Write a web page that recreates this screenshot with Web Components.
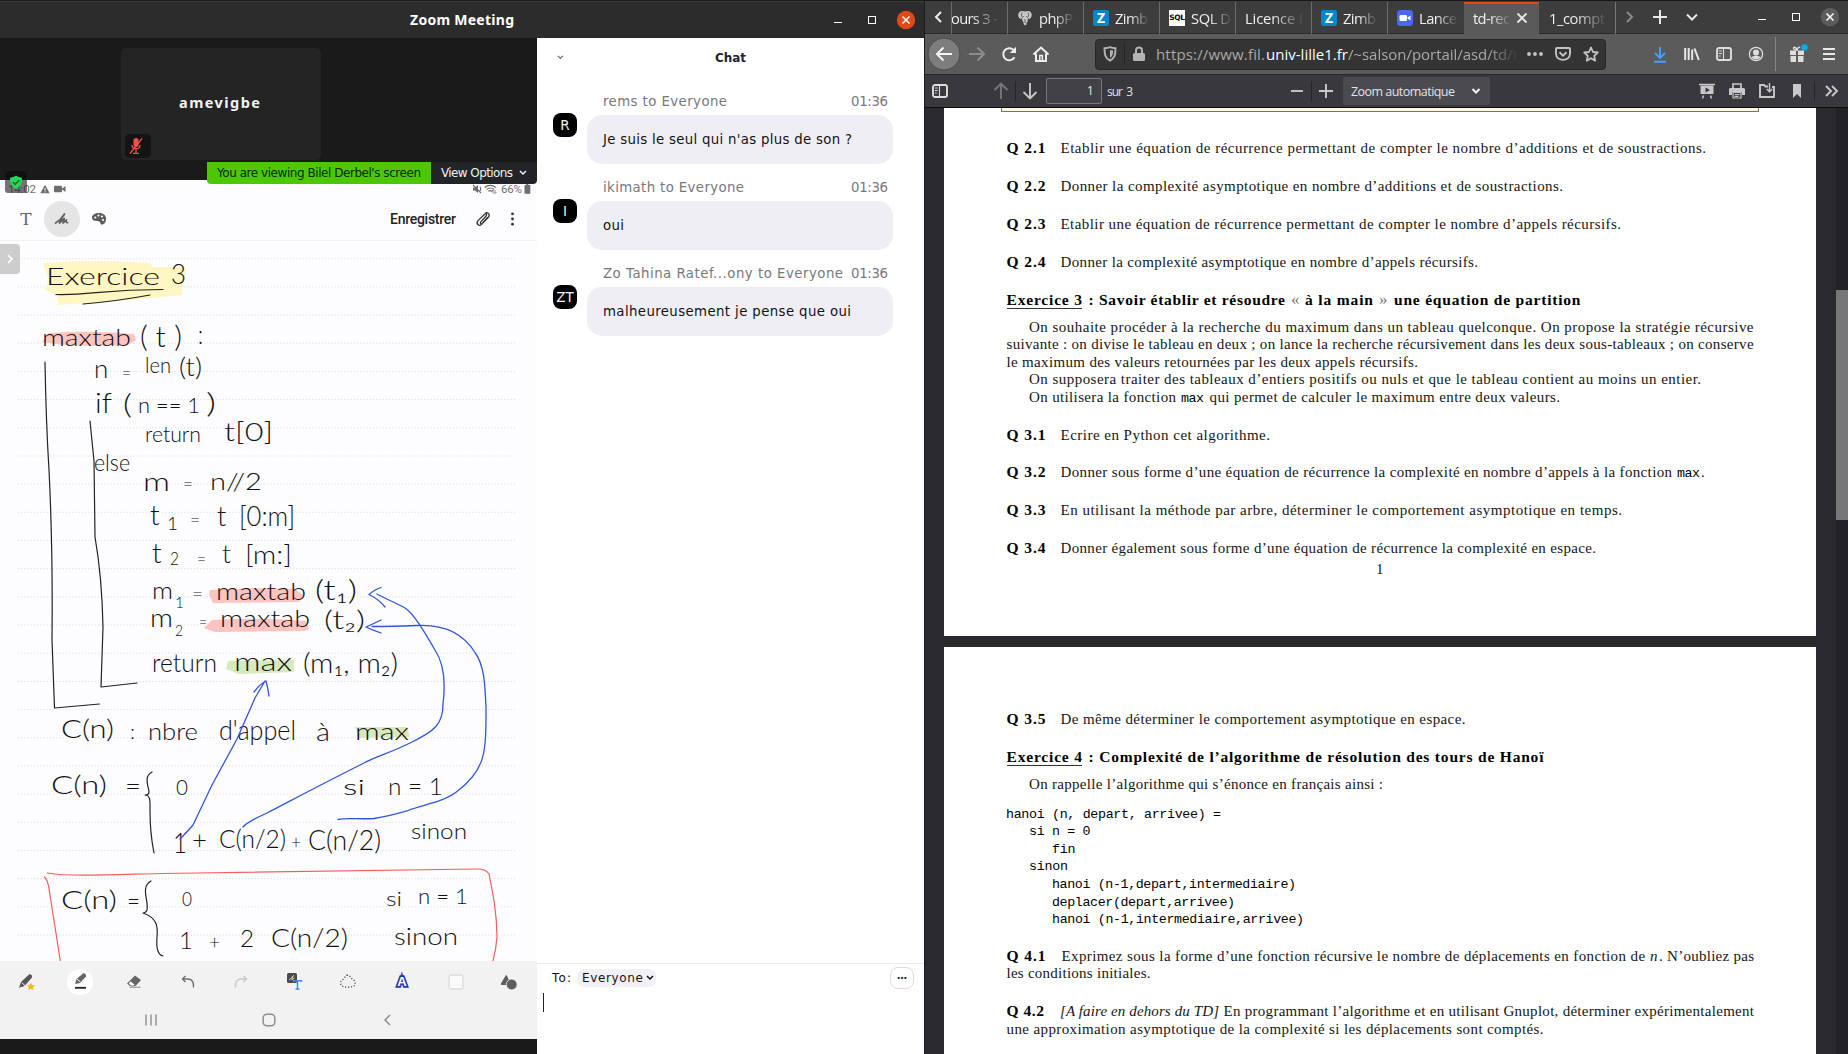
<!DOCTYPE html>
<html lang="fr">
<head>
<meta charset="utf-8">
<title>Zoom Meeting</title>
<style>
html,body{margin:0;height:100%;background:#1b1b1b;overflow:hidden}
body{display:flex;width:1848px;height:1054px}
</style>
</head>
<body>
<zoom-window></zoom-window>
<browser-window></browser-window>
<script>
const define = (name, css, html) => customElements.define(name, class extends HTMLElement {
  connectedCallback() {
    if (this.shadowRoot) return;
    this.attachShadow({ mode: 'open' }).innerHTML =
      `<style>*{box-sizing:border-box}:host{display:block;box-sizing:border-box}${css}</style>` + html(this);
  }
});

/* A flex row: every item is [left, width, markup, class]; gaps between items become margins. */
const row = (start, items) => {
  let at = start;
  return items.map(([x, w, html, cls = '']) => {
    const m = x - at; at = x + w;
    return `<div class="it ${cls}" style="flex:none;width:${w}px;margin-left:${m}px">${html}</div>`;
  }).join('');
};
const fit = (text, w, extra = '') => `<fit-text w="${w}" ${extra}>${text}</fit-text>`;
const tx = (x, x2, text, cls) => [x, x2 - x, fit(text, x2 - x), cls];
const ic = (cx, w, name) => [cx - w / 2, w, `<ui-icon name="${name}"></ui-icon>`];
const sep = (x, cls = 'sep') => [x, 1, '', cls];

/* name: [width, height, markup] */
const ICONS = {
  mic: [14, 18, '<rect x="4.5" y="1" width="5" height="9" rx="2.5" fill="#f0514f"/><path d="M3 8c0 5 8 5 8 0M7 12v4M4 16.3h6M13 1.500L1 16.500" stroke="#f0514f" fill="none" stroke-width="1.3"/>'],
  shield: [22, 22, '<rect width="22" height="22" rx="3" fill="#2d2d2d" opacity=".66"/><rect width="22" height="9" rx="3" fill="#111"/><path d="M11 4.500c2 1.600 4 2 6 2.200 0 5-1 8.600-6 11.300-5-2.700-6-6.300-6-11.300 2-.2 4-.6 6-2.200z" fill="#23d959"/><path d="M8 11l2.200 2.300L14.300 9" stroke="#1f6b40" stroke-width="1.500" fill="none"/>'],
  warn: [10, 10, '<path d="M5 .8L9.700 9.300H.3z" fill="#6d6d6d"/><path d="M5 4v2.500M5 7.300v1" stroke="#fff" stroke-width="1"/>'],
  cam: [12, 8, '<rect y=".8" width="8" height="6.500" rx="1" fill="#6d6d6d"/><path d="M7.500 4L11.500 1v6z" fill="#6d6d6d"/>'],
  mute: [10, 10, '<path d="M1 3.500h2L6 1v8L3 6.500H1z" fill="#6d6d6d"/><path d="M1 1l8 8M8 2.500c1 1.500 1 3 0 4.500" stroke="#6d6d6d" stroke-width="1.100" fill="none"/>'],
  wifi: [13, 10, '<path d="M.8 3.500c3-2.800 8-2.800 11 0M2.600 5.500c2-2 5.500-2 7.500 0M4.400 7.300c1-1 3-1 4 0" stroke="#6d6d6d" stroke-width="1.200" fill="none"/><path d="M9 9.500V6l-1.500 1.500M11 6v3.500L12.500 8" stroke="#6d6d6d" fill="none" stroke-width=".8"/>'],
  batt: [7, 10, '<path d="M2.300 0h2v1h2v8.800H.5V1h1.800z" fill="#6d6d6d"/>'],
  pen: [16, 14, '<path d="M1 11.500C5 9 9 4.500 10.500 2 8.500 5 6 8.500 5.500 11.200 7.500 9.500 9 7.500 10.300 6.500 10 8 9 9.500 9 11c1.500-1 2.500-2.500 3.500-3-.8 1.700-.3 3 1.800 2.700" fill="none" stroke="#626262" stroke-width="1.700" stroke-linejoin="round"/>'],
  palette: [16, 14, '<path d="M8 1c4 0 7 2.200 7 5.500 0 3.500-1.500 6-4 6-2.300 0-1-3-3.500-3.300C4 9 1 8.500 1 5.500 1 2.800 4 1 8 1z" fill="#5c5c5c"/><g fill="#fdfdff"><circle cx="4.300" cy="5.500" r="1.100"/><circle cx="7.500" cy="3.500" r="1.100"/><circle cx="11" cy="4.500" r="1.100"/><circle cx="12" cy="8" r="1.100"/></g>'],
  clip: [16, 16, '<path d="M12.800 6.300L7.200 12.500c-1 1-2.500-.3-1.600-1.400L11 5.200c1.500-1.700 0-3-1.400-2L3 9.600c-2.500 3 1 6.300 3.600 3.800l7-7.400C15.500 3 12.500.5 10 2.500" fill="none" stroke="#333" stroke-width="1.300"/>'],
  dots: [5, 16, '<g fill="#333"><circle cx="2.500" cy="2.800" r="1.400"/><circle cx="2.500" cy="8" r="1.400"/><circle cx="2.500" cy="13.200" r="1.400"/></g>'],
  gt: [8, 10, '<path d="M2 1l4 4-4 4" fill="none" stroke="#fff" stroke-width="1.700"/>'],
  down: [8, 6, '<path d="M1 1l3 3 3-3" fill="none" stroke="currentColor" stroke-width="1.500"/>'],
  hpen: [18, 18, '<path d="M1 15l2-6 2 4zM3.500 8.500L11 1.500c1.500-1 3.800 1 3 3L7.500 12l-3 2-2-2z" fill="#555"/><path d="M4 10l3 2.500" stroke="#eee"/><path d="M13 9.500l1.300 2.400 2.700.4-2 2 .5 2.700-2.500-1.300L10.500 17l.5-2.700-2-2 2.700-.4z" fill="#f8b916"/>'],
  hpen2: [26, 26, '<circle cx="13" cy="13" r="13" fill="#fff"/><path d="M8 15l1.500-5L16 4.500c1.500-.8 3.500 1 3 3L13 14z" fill="#666"/><path d="M10 10l3.500 3" stroke="#fff"/><path d="M8 18.800h11" stroke="#222" stroke-width="1.800"/>'],
  eraser: [20, 16, '<path d="M11 1.500L17 6l-5.500 6H6L3 9.500z" fill="#666"/><path d="M4.500 9.200l2-2.200 4.500 3.500-1.500 1.500H7z" fill="#fff" stroke="#666" stroke-width=".8"/><path d="M5.500 13.200h11" stroke="#888"/>'],
  undo: [16, 14, '<path d="M5.500 1L2.500 4l3 3M3 4h5c4.500 0 6 4 5.500 8.500" fill="none" stroke="#707070" stroke-width="1.400"/>'],
  redo: [16, 14, '<path d="M10.500 1l3 3-3 3M13 4H8C3.500 4 2 8 2.500 12.500" fill="none" stroke="#c7c7c7" stroke-width="1.400"/>'],
  ocr: [17, 17, '<rect x="1" y="0" width="10" height="10" rx="1.500" fill="#4a4a4a"/><path d="M3 7c2-1 3-3 4.500-4.500C6 5 6 6 6 7c1-1 2-2 2.500-2" stroke="#ddd" fill="none"/><path d="M7.500 9V7.800h8V9M11.500 8v8M9.500 16h4" stroke="#3a8ee6" stroke-width="1.400" fill="none"/>'],
  lasso: [18, 15, '<path d="M8.500 1.200C6.500 1 6 3.500 4.500 5 2 6.500.5 9 2.500 11.500c2.500 2.500 11 2 13 0 1.500-2.500 0-5.500-2-6.500-2-1-2.500-3.800-5-3.800z" fill="none" stroke="#555" stroke-width="1.400" stroke-dasharray="1.200 1.700"/>'],
  square: [16, 16, '<rect x="1" y="1" width="14" height="14" rx="2.500" fill="#fafafa" stroke="#dcdcdc" stroke-width="1.300"/>'],
  shapes: [18, 16, '<path d="M6 1c1 0 3 5 3.500 7.500-1 .8-2 1.500-2.500 2.500H1.500c-1 0-.9-.8 0-2.500z" fill="#5e5e5e"/><circle cx="11.700" cy="10.500" r="5.400" fill="#5e5e5e" stroke="#f2f2f3" stroke-width=".8"/>'],
  recent: [14, 14, '<path d="M2 1.500v11M7 1.500v11M12 1.500v11" stroke="#8e8e8e" stroke-width="1.400"/>'],
  home0: [14, 14, '<rect x="1.200" y="1.200" width="11.600" height="11.600" rx="3.500" fill="none" stroke="#8e8e8e" stroke-width="1.500"/>'],
  back0: [10, 14, '<path d="M8 2L3 7l5 5" stroke="#8e8e8e" stroke-width="1.500" fill="none"/>'],
  wmin: [10, 10, '<path d="M1 7.500h8" stroke="#fff" stroke-width="1"/>'],
  wmax: [10, 10, '<rect x="1.500" y="1.500" width="7" height="7" fill="none" stroke="#fff"/>'],
  wclose: [20, 20, '<circle cx="10" cy="10" r="9.200" fill="var(--close,#e2491a)"/><path d="M6.500 6.500l7 7M13.500 6.500l-7 7" stroke="#fff" stroke-width="1.500"/>'],
  left: [8, 14, '<path d="M7 2L2 7l5 5" stroke="#eee" stroke-width="2" fill="none"/>'],
  rightdim: [8, 14, '<path d="M1 2l5 5-5 5" stroke="#8a8a8a" stroke-width="2" fill="none"/>'],
  plus: [14, 14, '<path d="M7 0v14M0 7h14" stroke="#e8e8e8" stroke-width="2"/>'],
  vee: [12, 10, '<path d="M1 2.500l5 5 5-5" stroke="#e8e8e8" stroke-width="2" fill="none"/>'],
  elephant: [16, 16, '<path d="M2 2.500C4 .5 6 1 8 1.500 10 1 12 .5 14 2.500c1.500 2 .8 5-1.500 6.500l-1.500-.5-.5 3.500-1 .5v2L8 15.500 6.500 14v-2L5.500 11 5 8.500 3.500 9C1 7.500.5 4.500 2 2.500z" fill="#c6c6c6"/><path d="M5 2.500C4 5 4.500 7 6 8M11 2.500c1 2.500.5 4.500-1 5.500M6.500 6v.8M9.500 6v.8M8 9v4" stroke="#555" fill="none" stroke-width=".9"/>'],
  zcam: [16, 16, '<rect width="16" height="16" rx="3.500" fill="#4a68f4"/><rect x="2.500" y="5" width="7.500" height="6" rx="1.300" fill="#fff"/><path d="M10.500 7.500l3-2v5l-3-2z" fill="#fff"/>'],
  tclose: [12, 12, '<path d="M1.500 1.500l9 9M10.500 1.500l-9 9" stroke="#e8e8e8" stroke-width="1.800"/>'],
  back: [34, 34, '<circle cx="17" cy="17" r="16" fill="#7d7d7d" stroke="#4b4b4b"/><path d="M25 17H10M16.500 10.500L10 17l6.500 6.500" stroke="#f4f4f4" stroke-width="2" fill="none"/>'],
  fwd: [16, 16, '<path d="M0 8h15M8.500 1.500L15 8l-6.500 6.500" stroke="#8c8c8c" stroke-width="2" fill="none"/>'],
  reload: [16, 16, '<path d="M13.500 11.200A6 6 0 1 1 12.500 4" stroke="#eee" stroke-width="2" fill="none"/><path d="M15 .8V7H8.800z" fill="#eee"/>'],
  home: [18, 16, '<path d="M1.500 8.500L9 1.500l7.500 7" stroke="#eee" stroke-width="2" fill="none"/><path d="M4 7.500v7.500h10V7.500" stroke="#eee" stroke-width="2" fill="none"/><path d="M7.800 15V9.500h2.600V15" stroke="#eee" fill="none" stroke-width="1.500"/>'],
  ffshield: [14, 16, '<path d="M7 1.200c2 .9 4 1 5.500 1C12.500 8 12 12 7 14.700 2 12 1.500 8 1.500 2.200c1.500 0 3.500-.1 5.500-1z" fill="none" stroke="#b3b3b3" stroke-width="1.900"/><path d="M7 4c1.200.4 2.300.6 3.200.6C10.200 8 9.500 10.300 7 12z" fill="#b3b3b3"/>'],
  lock: [12, 16, '<rect x="0" y="7" width="12" height="8" rx="1.500" fill="#b3b3b3"/><path d="M3 7V4.500a3 3 0 0 1 6 0V7" fill="none" stroke="#b3b3b3" stroke-width="2"/>'],
  more: [16, 6, '<g fill="#c4c4c4"><circle cx="2" cy="3" r="1.900"/><circle cx="8" cy="3" r="1.900"/><circle cx="14" cy="3" r="1.900"/></g>'],
  pocket: [16, 14, '<path d="M2 1h12c.6 0 1 .4 1 1v4.500c0 8.500-14 8.500-14 0V2c0-.6.400-1 1-1z" fill="none" stroke="#c4c4c4" stroke-width="1.900"/><path d="M4.500 5.300L8 8.600l3.500-3.300" fill="none" stroke="#c4c4c4" stroke-width="1.900"/>'],
  star: [16, 16, '<path d="M8 1.500l2 4.500 4.800.5-3.600 3.300 1 4.900L8 12.200l-4.200 2.500 1-4.900L1.200 6.500 6 6z" fill="none" stroke="#c4c4c4" stroke-width="1.800" stroke-linejoin="round"/>'],
  dl: [14, 17, '<path d="M7 1v10.500M2 7l5 5 5-5M1 15.800h12" stroke="#45a1ff" stroke-width="1.900" fill="none"/>'],
  lib: [16, 14, '<path d="M1.200 1v12M4.700 1v12M8.200 2.500V13M10.500 1.500l4.300 11.500" stroke="#e8e8e8" stroke-width="2" fill="none"/>'],
  side: [16, 14, '<rect x="1" y="1" width="14" height="12" rx="2" fill="none" stroke="#dedede" stroke-width="1.900"/><path d="M7.500 1v12M2.800 4h3M2.800 6.500h3M2.800 9h2" stroke="#dedede" stroke-width="1.100"/>'],
  acct: [16, 16, '<circle cx="8" cy="8" r="6.600" fill="none" stroke="#dedede" stroke-width="1.300"/><circle cx="8" cy="6.500" r="3" fill="#dedede"/><path d="M3.500 11.300c2-2 7-2 9 0-2 2.800-7 2.800-9 0z" fill="#dedede"/>'],
  gift: [20, 20, '<path d="M3 6.500h6v4.500H3zM11 6.500h6v4.500h-6zM3.500 12h5.500v6H3.500zM11 12h5.500v6H11z" fill="#dedede"/><path d="M10 7V5M9.500 6C7 6 6 4.500 6.800 3.500S9.500 4 10 6c.5-2 2-3.500 3-2.500" stroke="#dedede" stroke-width="1.400" fill="none"/><circle cx="17.500" cy="3.500" r="3.200" fill="#00adf0"/>'],
  menu: [14, 14, '<path d="M1 2h12M1 7h12M1 12h12" stroke="#e8e8e8" stroke-width="1.900"/>'],
  up: [16, 18, '<path d="M8 17V2M1.500 8L8 1.500 14.500 8" stroke="#77777b" stroke-width="1.900" fill="none"/>'],
  dn: [16, 18, '<path d="M8 1v15M1.500 10L8 16.500 14.500 10" stroke="#c8c8ca" stroke-width="1.900" fill="none"/>'],
  minus: [14, 14, '<path d="M1 7h12" stroke="#c8c8ca" stroke-width="1.900"/>'],
  add: [14, 14, '<path d="M0 7h14M7 0v14" stroke="#c8c8ca" stroke-width="1.900"/>'],
  chev: [10, 8, '<path d="M1.500 2L5 5.500 8.500 2" fill="none" stroke="#f4f4f5" stroke-width="2"/>'],
  present: [16, 16, '<path d="M0 1.500h16" stroke="#c8c8ca" stroke-width="1.500"/><path d="M1.500 2.500h13v8.500h-13z" fill="#c8c8ca"/><path d="M6.500 4.500v5L11 7z" fill="#38383d"/><path d="M4.500 12.500l-1 3M11.500 12.500l1 3" stroke="#c8c8ca" stroke-width="1.500"/>'],
  print: [16, 16, '<path d="M4 5V1h8v4" fill="none" stroke="#c8c8ca" stroke-width="1.700"/><path d="M1.500 5h13c1 0 1.500.6 1.500 1.500V12h-3V9H3v3H0V6.500C0 5.600.5 5 1.500 5z" fill="#c8c8ca"/><path d="M4 9.500h8V15H4zM5.500 11.500h5M5.500 13.300h4" fill="none" stroke="#c8c8ca" stroke-width="1.200"/>'],
  open: [18, 16, '<path d="M10 3.500H7.500L6 2H2v12h14V4h-2" fill="none" stroke="#c8c8ca" stroke-width="1.900"/><path d="M11.500 0v9M8.800 6l2.700 2.700L14.200 6" fill="none" stroke="#c8c8ca" stroke-width="1.400"/>'],
  mark: [10, 16, '<path d="M1 1h8v14L5 11l-4 4z" fill="#c8c8ca"/>'],
  more2: [14, 12, '<path d="M1 1l5 5-5 5M7 1l5 5-5 5" fill="none" stroke="#c8c8ca" stroke-width="1.900"/>']
};
define('ui-icon', ':host{display:flex;justify-content:center;align-items:center}svg{display:block;flex:none;overflow:visible}', el => {
  const [w, h, m] = ICONS[el.getAttribute('name')];
  return `<svg width="${w}" height="${h}" viewBox="0 0 ${w} ${h}">${m}</svg>`;
});

/* ---------- Zoom meeting ---------- */
define('zoom-title', `:host{display:flex;height:38px;align-items:center;background:#2c2c2c;border-top:1px solid #1a1a1a;box-shadow:inset 0 1px #3c3c3c;font:bold 14px "Noto Sans",sans-serif;color:#fff}`,
  () => row(0, [tx(410, 514, 'Zoom Meeting'), ic(838, 10, 'wmin'), ic(872, 10, 'wmax'), ic(906, 20, 'wclose')]));

define('participant-strip', `:host{display:flex;flex-direction:column;height:142px;background:#1a1a1a;padding:10px 0 0 121px}
.tile{width:200px;height:112px;border-radius:5px;background:#242424;display:flex;flex-direction:column;justify-content:space-between;padding:42px 0 2px 4px;font:bold 14.5px "Noto Sans",sans-serif;color:#f3f3f3}
.name{padding-left:54px;line-height:24px}.mic{width:26px;height:24px;border-radius:5px;background:#141414;display:flex;align-items:center;padding-left:4px}`,
  () => `<div class="tile"><div class="name">${fit('amevigbe', 81)}</div><div class="mic"><ui-icon name="mic"></ui-icon></div></div>`);

define('share-banner', `:host{position:absolute;left:207px;top:124px;display:flex;height:22px;font:12px/22px "DejaVu Sans",sans-serif;z-index:2}
.g{width:224px;background:#4bc800;color:#10250a;padding-left:10px;border-radius:0 0 0 4px}.o{width:106px;background:#232427;color:#f1f1f1;padding-left:10px;border-radius:0 0 4px 0;display:flex;align-items:center;gap:6px}`,
  () => `<div class="g">${fit("You are viewing Bilel Derbel's screen", 204)}</div><div class="o">${fit('View Options', 72)}<ui-icon name="down"></ui-icon></div>`);
define('shield-badge', ':host{position:absolute;left:5px;top:133px;z-index:2}', () => '<ui-icon name="shield"></ui-icon>');

define('phone-status', ':host{display:flex;height:18px;align-items:center;font:11.5px Roboto,sans-serif;color:#707070;background:#fdfdff}',
  () => row(0, [tx(8, 36, '14:02'), ic(45, 10, 'warn'), ic(60, 12, 'cam'), ic(477, 10, 'mute'), ic(490.5, 13, 'wifi'), tx(501, 522, '66%'), ic(527, 7, 'batt')]));
define('notes-bar', `:host{display:flex;height:43px;align-items:center;background:#fdfdff;border-bottom:1px solid #f1f1f3;color:#222}
.t{font:17px "DejaVu Serif",serif;color:#666;text-align:center}.c{height:36px;border-radius:50%;background:#e5e5e6;display:flex;align-items:center;justify-content:center}.e{font:500 14px Roboto,sans-serif}`,
  () => row(0, [[19, 14, 'T', 't'], [44, 36, '<ui-icon name="pen"></ui-icon>', 'c'], ic(99, 16, 'palette'), tx(390, 456, 'Enregistrer', 'e'), ic(483, 16, 'clip'), ic(512.5, 5, 'dots')]));

/* Words are stretched to their width, unless that would thicken the strokes: those are letter-spaced. */
const em = c => 'm' === c ? .8 : "()[]tifl".includes(c) ? .31 : " :,'".includes(c) ? .2 : '₁₂'.includes(c) ? .35 : .53;
const hw = (x, x2, y, text, size = 25) => {
  const ratio = (x2 - x) / ([...text].reduce((s, c) => s + em(c), 0) * size);
  const wide = ratio > 1.32;
  const len = text.length === 1 && wide ? '' : `textLength="${x2 - x}" lengthAdjust="${wide ? 'spacing' : 'spacingAndGlyphs'}"`;
  return `<text x="${x}" y="${y + 1.5}" font-size="${size}" ${len}>${text}</text>`;
};
const rules = Array.from({ length: 25 }, (_, i) => { const y = 258.7 + i * 28.18; return `M18 ${y.toFixed(1)}H515`; }).join('');
define('note-canvas', `:host{height:720px;background:#fdfdff;overflow:hidden}svg{display:block}text{font-family:Lato,sans-serif;font-weight:300;fill:#111}
.k{fill:none;stroke:#222;stroke-width:1.200;stroke-linecap:round;stroke-linejoin:round}.b{stroke:#2f55e0;stroke-width:1.300}.r{stroke:#fa5c5c}`,
  () => `<svg width="537" height="720" viewBox="0 241 537 720">
<path d="${rules}" stroke="#d9d9dd" stroke-width="1" stroke-dasharray="1 2.200"/>
<path d="M44 263q50-4 105 0l4 4 32 0 1 6-4 10 0 12-40 4-84 6-1-8-12-8q6-10-1-22z" fill="#fff6c2"/>
<path d="M49 333q45-3 85 1l2 6-8 5q-50 2-72-1l-14-2z" fill="#ffc3c0"/>
<path d="M210 590q45-3 85-1l8 6-4 7-86 1-4-8z" fill="#ffc3c0"/><path d="M212 620q50-3 94 1l3 8-4 2-90 1-11-4z" fill="#ffc3c0"/>
<path d="M228 661l66-1v12l-55 2-13-5z" fill="#d7eabd"/><path d="M355 727h52l3 10-51 1z" fill="#d7eabd"/>
${hw(46, 160, 283, 'Exercice', 24)}${hw(171, 186, 282, '3', 27)}
${hw(42, 131, 344, 'maxtab', 23)}${hw(140, 182, 345, '(t)', 30)}${hw(198, 203, 342, ':')}
${hw(94, 113, 376, 'n', 26)}${hw(122, 131, 377, '=', 18)}${hw(145, 171, 371, 'len', 22)}${hw(179, 202, 374, '(t)')}
${hw(95, 112, 411, 'if', 27)}${hw(123, 132, 412, '(', 27)}${hw(138, 200, 411, 'n == 1', 22)}${hw(206, 216, 411, ')', 27)}
${hw(145, 201, 440, 'return', 22)}${hw(224, 273, 439, 't[0]', 26)}
${hw(94, 130, 469, 'else', 24)}
${hw(143, 170, 489, 'm', 26)}${hw(183, 193, 489, '=', 20)}${hw(210, 262, 488, 'n//2', 23)}
${hw(150, 162, 523, 't', 28)}${hw(167, 178, 528, '1', 17)}${hw(190, 200, 524, '=', 18)}${hw(217, 233, 524, 't', 27)}${hw(239, 295, 524, '[0:m]', 27)}
${hw(152, 164, 561, 't', 28)}${hw(170, 179, 563, '2', 17)}${hw(197, 206, 563, '=', 18)}${hw(222, 235, 561, 't', 26)}${hw(245, 292, 562, '[m:]', 25)}
${hw(152, 173, 597, 'm', 24)}${hw(175, 184, 606, '1', 16)}${hw(192, 203, 599, '=', 20)}${hw(216, 306, 598, 'maxtab', 24)}${hw(315, 357, 598, '(t₁)', 27)}
${hw(150, 173, 625, 'm', 25)}${hw(175, 183, 634, '2', 16)}${hw(199, 207, 626, '=', 18)}${hw(220, 310, 625, 'maxtab', 24)}${hw(324, 365, 627, '(t₂)', 25)}
${hw(152, 217, 670, 'return', 25)}${hw(234, 292, 669, 'max', 25)}${hw(303, 398, 671, '(m₁, m₂)', 28)}
${hw(61, 114, 736, 'C(n)', 25)}${hw(130, 135, 737, ':', 20)}${hw(148, 198, 738, 'nbre', 24)}${hw(219, 296, 738, "d'appel", 27)}${hw(316, 330, 739, 'à', 25)}${hw(355, 409, 738, 'max', 24)}
${hw(51, 107, 792, 'C(n)', 26)}${hw(125, 141, 793, '=', 26)}${hw(176, 188, 793, '0', 21)}${hw(343, 365, 793, 'si', 22)}${hw(388, 443, 793, 'n = 1', 23)}
${hw(173, 187, 851, '1', 28)}${hw(192, 207, 847, '+', 25)}${hw(219, 286, 846, 'C(n/2)', 26)}${hw(291, 301, 847, '+', 20)}${hw(308, 381, 848, 'C(n/2)', 28)}${hw(411, 467, 837, 'sinon', 22)}
${hw(61, 117, 907, 'C(n)', 26)}${hw(127, 140, 908, '=', 23)}${hw(182, 192, 904, '0', 19)}${hw(386, 402, 904, 'si', 19)}${hw(418, 468, 902, 'n = 1', 22)}
${hw(179, 197, 947, '1', 24)}${hw(209, 220, 947, '+', 20)}${hw(240, 254, 945, '2', 24)}${hw(271, 348, 945, 'C(n/2)', 26)}${hw(394, 458, 943, 'sinon', 24)}
<path class="k" d="M56 294.500c35 1 45-5 107-5M83 304q35-3 67-9M45 362q1 60 4 108 4 80 3 170l2.500 68 45-4M90 421q2 20 4 40l1 76q7 40 8 90l-2 60 36-4"/>
<path class="k" d="M152 772c-9 5-3 15-3 20 0 2-2 3-4 3 6 0 5 8 5 16 0 20 2 32 4 42M151 881c-11 6-2 20-4 29-1 2-2 3-4 3 14 5 15 13 14 24-1 12 1 18 6 19"/>
<path class="k b" d="M381 587.500q-8 3-12 7 10 5 16 12.500M377 594c7 4 19 9 28 14 9 6 19 23 30 42 8 12 11 30 8 54 0 20-8 27-33 39-18 9-35 14-46 20-40 20-70 36-97 50q-20 9-24 14"/>
<path class="k b" d="M381 620q-8 4-15 7 6 3 15 6M372 626.500q20 0 45-1 40-2 58 27c10 14 10 35 11 55 0 45 0 62-29 84-14 11-34 13-49 19-14 4-22 6-34 8-15 1-28-1-36 1"/>
<path class="k b" d="M180 839q8-8 13-14l19-40 25-46 18-41 10-17M254 692q6-8 12-11 2 7 3 15"/>
<path class="k r" d="M47 873c30 5 90 0 150 0l280-4q9 0 12 5c4 20 8 40 8 63q-1 13-4 24M44.500 877q4 4 5 15l11 70"/>
</svg>`);
define('side-tab', ':host{position:absolute;left:0;top:206px;width:20px;height:30px;border-radius:0 4px 4px 0;background:#cdcdcd;display:flex;align-items:center;justify-content:center}', () => '<ui-icon name="gt"></ui-icon>');
define('tool-row', `:host{display:flex;align-items:center;height:41px;background:#f2f2f3}ui-icon,b{flex:none;width:53.6px;text-align:center}
b{font:bold 13px "Liberation Sans",sans-serif;color:#fff;-webkit-text-stroke:3.500px #2238b5;paint-order:stroke fill}`,
  () => ['hpen', 'hpen2', 'eraser', 'undo', 'redo', 'ocr', 'lasso', 'A', 'square', 'shapes'].map(n => n === 'A' ? '<b>A</b>' : `<ui-icon name="${n}"></ui-icon>`).join(''));
define('android-nav', ':host{display:flex;align-items:center;height:37px;background:#f2f2f2;padding-bottom:1px}',
  () => row(0, [ic(151, 14, 'recent'), ic(269, 14, 'home0'), ic(386.5, 10, 'back0')]));
define('share-view', ':host{width:537px;height:1016px;position:relative;display:flex;flex-direction:column;background:#1a1a1a}',
  () => `<participant-strip></participant-strip><phone-status></phone-status><notes-bar></notes-bar><note-canvas></note-canvas><tool-row></tool-row><android-nav></android-nav><share-banner></share-banner><shield-badge></shield-badge><side-tab></side-tab>`);

define('chat-message', `:host{display:flex;height:86px;padding-left:16px;font:13.300px "DejaVu Sans",sans-serif}
.a{width:24px;height:24px;border-radius:8px;background:#000;color:#f3f3f3;text-align:center;line-height:24px;margin:20px 10px 0 0;font-size:13.500px;flex:none}
.m{width:306px}.h{display:flex;justify-content:space-between;height:22px;line-height:17px;padding:0 5px 0 16px;color:#77777f}
.u{height:49px;border-radius:15px;background:#efeef4;padding:1px 16px 0;line-height:48px;color:#131317}`,
  el => { const g = n => el.getAttribute(n); return `<div class="a">${g('initials')}</div><div class="m"><div class="h">${fit(g('from') + ' to Everyone', g('fw'))}${fit('01:36', 37)}</div><div class="u"><fit-text w="${g('w')}"><slot></slot></fit-text></div></div>`; });
define('chat-composer', `:host{border-top:1px solid #ececef;height:91px;font:12px "DejaVu Sans",sans-serif;color:#131317}
.l{display:flex;align-items:center;height:29px}.l>*{margin-top:-1px}.p{display:flex;align-items:center;height:18px;border-radius:7px;background:#f1f1f5;padding-left:5px;gap:3px}
.d{height:22px;border:1px solid #dcdce2;border-radius:8px;text-align:center;line-height:15px;font-weight:bold;font-size:10px}.cur{width:1px;height:19px;background:#222;margin-left:6px}`,
  () => `<div class="l">${row(537, [tx(552, 571, 'To:'), [577, 79, fit('Everyone', 61) + '<ui-icon name="down"></ui-icon>', 'p'], [890, 24, '…', 'd']])}</div><div class="cur"></div>`);
define('chat-panel', `:host{width:387px;height:1016px;background:#fff;display:flex;flex-direction:column}
.t{display:flex;align-items:center;height:40px;font:bold 12px "DejaVu Sans",sans-serif;color:#232333}.t ui-icon{color:#6c6c80;zoom:.85}.l{flex:1;padding-top:15px}`,
  () => `<div class="t">${row(537, [ic(560, 8, 'down'), tx(715, 746, 'Chat')])}</div><div class="l">
<chat-message initials="R" from="rems" fw="124" w="249">Je suis le seul qui n'as plus de son ?</chat-message>
<chat-message initials="I" from="ikimath" fw="141" w="21">oui</chat-message>
<chat-message initials="ZT" from="Zo Tahina Ratef...ony" fw="240" w="248">malheureusement je pense que oui</chat-message></div><chat-composer></chat-composer>`);
define('zoom-window', ':host{width:924px;height:1054px;flex:none}.b{display:flex}', () => '<zoom-title></zoom-title><div class="b"><share-view></share-view><chat-panel></chat-panel></div>');

/* ---------- Browser ---------- */
const tab = (x, w, inner, cls = '') => [x, w, inner, 'tab ' + cls];
const fav = { z: '<span class="z">Z</span>', s: '<span class="s">SQL</span>', e: '<ui-icon name="elephant"></ui-icon>', c: '<ui-icon name="zcam"></ui-icon>' };
const lab = (text, w) => `<span class="f">${fit(text, w)}</span>`;
define('tab-strip', `:host{display:flex;height:34px;background:#3d3d3d;border-top:1px solid #191919;border-bottom:1px solid #2a2a2a;align-items:center;font:14.700px "Open Sans",sans-serif;color:#f0f0f0;--close:#5c5c5c}
.tab{height:32px;border-left:1px solid #6b6b6b;display:flex;align-items:center;gap:6px;padding:0 0 0 9px;overflow:hidden;margin-top:1px}
.f{-webkit-mask-image:linear-gradient(90deg,#000 45%,transparent 104%);display:block}
.on{background:#5a5a5a;border-top:2px solid #e2491a;border-left:0;padding-bottom:2px}.first{padding-left:0}.first .f{margin-left:-1px}
.z{width:16px;height:16px;border-radius:2px;background:#0087cb;color:#fff;font:bold 14px/16px "Open Sans";text-align:center}
.s{width:16px;height:16px;background:#fff;color:#000;font:bold 7.500px/16px "DejaVu Sans";letter-spacing:-.4px;text-align:center}.last{border-left:0;border-right:1px solid #777}`,
  () => row(925, [ic(938, 8, 'left'),
    tab(951, 56, lab('ours 3 -', 47), 'first'), tab(1007, 76, fav.e + lab('phpP', 34)), tab(1083, 76, fav.z + lab('Zimb', 33)),
    tab(1159, 76, fav.s + lab('SQL D', 40)), tab(1235, 76, lab('Licence I', 58)), tab(1311, 76, fav.z + lab('Zimb', 33)),
    tab(1387, 76, fav.c + lab('Lance', 38)), tab(1464, 75, lab('td-rec', 37) + '<ui-icon name="tclose"></ui-icon>', 'on'), tab(1540, 76, lab('1_compt', 56), 'last'),
    ic(1630, 8, 'rightdim'), ic(1660, 14, 'plus'), ic(1692, 12, 'vee'), ic(1762, 10, 'wmin'), ic(1796, 10, 'wmax'), ic(1830, 20, 'wclose')]));
define('nav-bar', `:host{display:flex;align-items:center;height:41px;background:#5b5b5b;border-bottom:1px solid #27272a}
.url{display:flex;align-items:center;height:31px;border:1px solid #272727;border-radius:4px;background:#343434;font:15px "Open Sans",sans-serif;color:#a8a8a8}
.w{color:#fafafa}.sep{height:22px;background:#262626}.sep2{height:34px;background:#858585}.fade{-webkit-mask-image:linear-gradient(90deg,#000 82%,transparent)}`,
  () => row(925, [ic(944, 34, 'back'), ic(977, 16, 'fwd'), ic(1009, 16, 'reload'), ic(1041, 18, 'home'),
    [1095, 511, row(1096, [ic(1110, 14, 'ffshield'), sep(1124), ic(1139, 12, 'lock'), tx(1156, 1265, 'https://www.fil.'), tx(1266, 1348, 'univ-lille1.fr', 'w'), tx(1348, 1518, '/~salson/portail/asd/td/t', 'fade'), ic(1535, 16, 'more'), ic(1563, 16, 'pocket'), ic(1591, 16, 'star')]), 'url'],
    ic(1660, 14, 'dl'), ic(1692, 16, 'lib'), ic(1724, 16, 'side'), ic(1756, 16, 'acct'), sep(1775, 'sep2'), ic(1797, 20, 'gift'), ic(1829, 14, 'menu')]));
define('pdf-toolbar', `:host{display:flex;align-items:center;height:33px;background:#38383d;border-bottom:1px solid #0c0c0d;font:12.500px "Open Sans",sans-serif;color:#e3e3e6}
.sep{height:20px;background:#252528}.in{height:26px;border:1px solid #77777b;background:#414146;border-radius:2px;text-align:right;padding-right:7px;line-height:24px}
.sel{display:flex;align-items:center;height:28px;background:#4a4a4f;border-radius:2px}.n{font-size:12px;word-spacing:2px}`,
  () => row(925, [ic(940, 16, 'side'), ic(1001, 16, 'up'), sep(1015), ic(1030, 16, 'dn'), [1046, 56, '1', 'in'], tx(1107, 1133, 'sur 3', 'n'), ic(1297, 14, 'minus'), sep(1311), ic(1326, 14, 'add'),
    [1343, 147, row(1343, [tx(1351, 1455, 'Zoom automatique'), ic(1476, 10, 'chev')]), 'sel'],
    ic(1707, 16, 'present'), ic(1737, 16, 'print'), ic(1767, 18, 'open'), ic(1797, 10, 'mark'), sep(1814), ic(1832, 14, 'more2')]));

const L = 1006.5, B = 1060.5;
const q = (y, n, end, text) => [y, [tx(L, 1045.5, 'Q ' + n, 'b'), tx(B, end, text)]];
const code = (y, x, end, text) => [y, [tx(x, end, text, 'tt')]];
const page = (top, rows) => {
  let at = top;
  return rows.map(([y, items]) => { const t = Math.round(y - 14), m = t - at; at = t + 18; return `<div class="r" style="margin-top:${m}px">${row(944, items)}</div>`; }).join('');
};
const P1 = [
  q(153, '2.1', 1706, "Etablir une équation de récurrence permettant de compter le nombre d’additions et de soustractions."),
  q(191, '2.2', 1563, "Donner la complexité asymptotique en nombre d’additions et de soustractions."),
  q(229, '2.3', 1621, "Etablir une équation de récurrence permettant de compter le nombre d’appels récursifs."),
  q(267, '2.4', 1478, "Donner la complexité asymptotique en nombre d’appels récursifs."),
  [305, [tx(L, 1082, 'Exercice 3', 'b u'), tx(1088.5, 1285, ': Savoir établir et résoudre', 'b'), tx(1291, 1300, '«', 'g'), tx(1305, 1373, 'à la main', 'b'), tx(1379, 1388, '»', 'g'), tx(1394, 1580.5, 'une équation de partition', 'b')]],
  [332, [tx(1029, 1753.5, "On souhaite procéder à la recherche du maximum dans un tableau quelconque. On propose la stratégie récursive")]],
  [349.4, [tx(L, 1753.5, "suivante : on divise le tableau en deux ; on lance la recherche récursivement dans les deux sous-tableaux ; on conserve")]],
  [367, [tx(L, 1418, "le maximum des valeurs retournées par les deux appels récursifs.")]],
  [384.4, [tx(1029, 1701, "On supposera traiter des tableaux d’entiers positifs ou nuls et que le tableau contient au moins un entier.")]],
  [402, [tx(1029, 1176, "On utilisera la fonction"), tx(1181, 1204, 'max', 'tt'), tx(1209.5, 1560, "qui permet de calculer le maximum entre deux valeurs.")]],
  q(440, '3.1', 1270, "Ecrire en Python cet algorithme."),
  [477.4, [tx(L, 1045.5, 'Q 3.2', 'b'), tx(B, 1672, "Donner sous forme d’une équation de récurrence la complexité en nombre d’appels à la fonction"), tx(1677, 1700, 'max', 'tt'), tx(1701, 1705, '.')]],
  q(515, '3.3', 1622, "En utilisant la méthode par arbre, déterminer le comportement asymptotique en temps."),
  q(553, '3.4', 1596, "Donner également sous forme d’une équation de récurrence la complexité en espace."),
  [574, [tx(1376, 1383, '1')]]
];
const P2 = [
  q(724, '3.5', 1465.5, "De même déterminer le comportement asymptotique en espace."),
  [762, [tx(L, 1082, 'Exercice 4', 'b u'), tx(1088.5, 1543.5, ": Complexité de l’algorithme de résolution des tours de Hanoï", 'b')]],
  [789, [tx(1029, 1383, "On rappelle l’algorithme qui s’énonce en français ainsi :")]],
  code(818, 1006, 1221, 'hanoi (n, depart, arrivee) ='),
  code(835, 1029, 1090.5, 'si n = 0'),
  code(853, 1052, 1075.5, 'fin'),
  code(870, 1029, 1068, 'sinon'),
  code(888, 1052, 1296, 'hanoi (n-1,depart,intermediaire)'),
  code(906, 1052, 1235, 'deplacer(depart,arrivee)'),
  code(923, 1052, 1304, 'hanoi (n-1,intermediaire,arrivee)'),
  [961, [tx(L, 1045.5, 'Q 4.1', 'b'), tx(1061.5, 1645, "Exprimez sous la forme d’une fonction récursive le nombre de déplacements en fonction de"), tx(1650, 1658, 'n', 'i'), tx(1659, 1754, ". N’oubliez pas")]],
  [978, [tx(L, 1150.5, "les conditions initiales.")]],
  [1016, [tx(L, 1044, 'Q 4.2', 'b'), tx(1060, 1219, "[A faire en dehors du TD]", 'i'), tx(1223.5, 1754, "En programmant l’algorithme et en utilisant Gnuplot, déterminer expérimentalement")]],
  [1034, [tx(L, 1543.5, "une approximation asymptotique de la complexité si les déplacements sont comptés.")]]
];
/* Pieces of a line share one baseline whatever their font and size. */
define('pdf-page', `:host{width:872px;background:#fff;display:flow-root;font:15px/18px "Liberation Serif",serif;color:#161616;overflow:hidden}
.r{display:flex;height:18px;align-items:baseline}.r::before{content:"";height:14px;width:0}.b{font-weight:bold;font-size:15.500px;color:#000}.i{font-style:italic}.g{color:#777;font-size:17px}.tt{font:13.300px/18px "Liberation Mono",monospace;color:#000}
.u{box-shadow:inset 0 -1px #333}.box{width:758px;height:4px;margin-left:57px;background:#fdf6e3;border:solid #77746c;border-width:0 1px 1px}`,
  el => el.getAttribute('n') === '1' ? '<div class="box"></div>' + page(112, P1) : page(647, P2));
define('pdf-view', `:host{display:flex;flex:1;min-height:0;background:#2a2a2e}.p{width:911px;padding-left:19px;display:flex;flex-direction:column;gap:11px}
.s{width:12px;background:#232327;padding-top:182px}.s div{height:230px;background:#77777a}`,
  () => `<div class="p"><pdf-page n="1" style="height:528px"></pdf-page><pdf-page n="2" style="height:407px"></pdf-page></div><div class="s"><div></div></div>`);
define('browser-window', ':host{width:924px;height:1054px;flex:none;display:flex;flex-direction:column;border-left:1px solid #1c1c1e;overflow:hidden}',
  () => '<tab-strip></tab-strip><nav-bar></nav-bar><pdf-toolbar></pdf-toolbar><pdf-view></pdf-view>');

/* Spreads its text over the width in the w attribute by adjusting the letter spacing. */
customElements.define('fit-text', class extends HTMLElement {
  connectedCallback() {
    if (this.shadowRoot) return;
    this.attachShadow({ mode: 'open' }).innerHTML = '<style>:host{display:block;flex:none;white-space:pre}span{display:inline-block}</style><span><slot></slot></span>';
    const w = +this.getAttribute('w');
    this.style.width = w + 'px';
    const inner = this.querySelector('slot');
    const text = inner ? inner.assignedNodes().map(n => n.textContent).join('') : this.textContent;
    const natural = this.shadowRoot.querySelector('span').getBoundingClientRect().width;
    this.style.letterSpacing = ((w - natural) / Math.max(1, text.length - 1)).toFixed(3) + 'px';
  }
});
</script>
</body>
</html>
